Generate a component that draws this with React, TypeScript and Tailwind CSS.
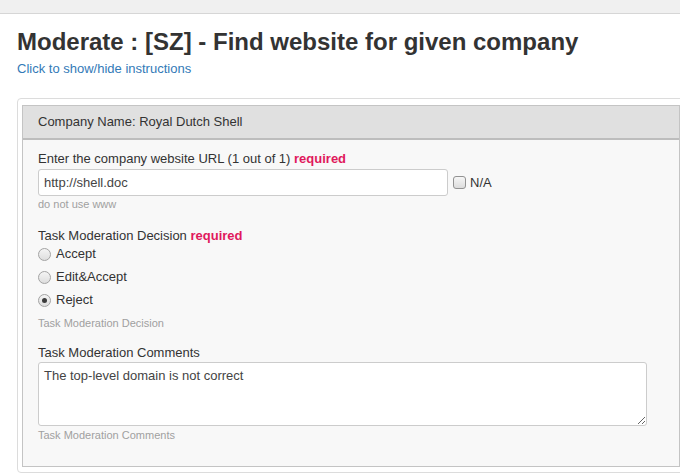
import React from "react"

function Radio({ label, checked }: { label: string; checked?: boolean }) {
  return (
    <label className="flex h-[18px] items-center gap-[5px]">
      <span className="flex h-[13px] w-[13px] items-center justify-center rounded-full border border-[#a3a3a3] bg-gradient-to-b from-[#f4f4f4] to-[#dedede]">
        {checked && <span className="h-[5px] w-[5px] rounded-full bg-[#3c3c3c]" />}
      </span>
      <span>{label}</span>
    </label>
  )
}

export default function App() {
  return (
    <div className="w-[680px] h-[476px] overflow-hidden bg-white text-[13px] leading-[18px] text-[#333] font-['Liberation_Sans',Arial,sans-serif]">
      <div className="h-[14px] bg-[#f0f0f0] border-b border-[#d6d6d6]" />

      <div className="pl-[17px]">
        <h3 className="mt-[15px] text-[24px] leading-[26px] font-bold text-[#333]">
          Moderate : [SZ] - Find website for given company
        </h3>
        <a className="mt-[5px] block text-[#337ab7]">Click to show/hide instructions</a>

        <div className="mt-[20px] w-[668px] rounded-[4px] border border-[#dcdcdc] bg-white pt-[6px] pl-[4px] pr-[4px] pb-[5px]">
          <div className="border border-[#c4c4c4]">
            <div className="flex h-[34px] items-center border-b-2 border-[#bdbdbd] bg-[#e0e0e0] pl-[15px]">
              Company Name: Royal Dutch Shell
            </div>

            <div className="bg-[#f8f8f8] pl-[15px] pt-[10px] pb-[24px]">
              <div>
                Enter the company website URL (1 out of 1){" "}
                <span className="font-bold text-[#e0195c]">required</span>
              </div>
              <div className="mt-[1px] flex items-center">
                <input
                  readOnly
                  defaultValue="http://shell.doc"
                  className="h-[27px] w-[410px] rounded-[3px] border border-[#cccccc] bg-white px-[5px] text-[13px] text-[#444] outline-none"
                />
                <span className="ml-[5px] h-[13px] w-[13px] rounded-[3px] border border-[#929292] bg-gradient-to-b from-[#f6f6f6] to-[#dcdcdc]" />
                <span className="ml-[4px]">N/A</span>
              </div>
              <div className="mt-[1px] text-[11px] leading-[14px] text-[#a0a0a0]">do not use www</div>

              <div className="mt-[16px]">
                Task Moderation Decision <span className="font-bold text-[#e0195c]">required</span>
              </div>
              <div className="flex flex-col gap-[5px]">
                <Radio label="Accept" />
                <Radio label="Edit&Accept" />
                <Radio label="Reject" checked />
              </div>
              <div className="mt-[7px] text-[11px] leading-[14px] text-[#a0a0a0]">Task Moderation Decision</div>

              <div className="mt-[14px]">Task Moderation Comments</div>
              <textarea
                readOnly
                defaultValue="The top-level domain is not correct"
                className="block h-[64px] w-[609px] resize-y rounded-[3px] border border-[#cccccc] bg-white px-[5px] py-[4px] text-[13px] leading-[18px] text-[#444] outline-none"
              />
              <div className="mt-[2px] text-[11px] leading-[14px] text-[#a0a0a0]">Task Moderation Comments</div>
            </div>
          </div>
        </div>
      </div>
    </div>
  )
}
